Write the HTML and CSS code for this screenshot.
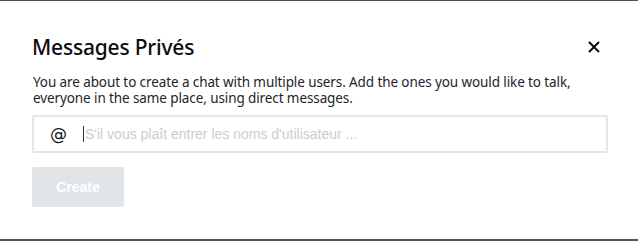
FILE: index.html
```html
<!DOCTYPE html>
<html lang="fr">
<head>
<meta charset="utf-8">
<title>Messages Privés</title>
<link rel="stylesheet" href="styles.css">
</head>
<body>
<div class="backdrop-top"></div>
<div class="modal">
  <header class="modal-header">
    <h2 class="modal-title">Messages Privés</h2>
    <button class="close" aria-label="Fermer">
      <svg width="12" height="12" viewBox="0 0 12 12"><path d="M1 1L11 11M11 1L1 11" stroke="#000" stroke-width="1.8" fill="none"/></svg>
    </button>
  </header>
  <p class="desc">You are about to create a chat with multiple users. Add the ones you would like to talk, everyone in the same place, using direct messages.</p>
  <div class="input">
    <span class="at">@</span>
    <span class="caret"></span>
    <span class="placeholder">S'il vous plaît entrer les noms d'utilisateur ...</span>
  </div>
  <button class="create">Create</button>
</div>
<div class="backdrop-bottom"></div>
</body>
</html>
```
FILE: styles.css
```css
html, body {
  margin: 0;
  padding: 0;
  background: #4c5156;
}
.backdrop-top {
  height: 1px;
  background: #4a4f54;
}
.backdrop-bottom {
  height: 3px;
  background: #51565b;
}
.modal {
  height: 238px;
  box-sizing: border-box;
  background: #fff;
  padding: 32px 30px 0 32px;
  font-family: "Noto Sans", "DejaVu Sans", sans-serif;
  color: #2f343d;
}
.modal-header {
  display: flex;
  align-items: center;
  justify-content: space-between;
  height: 28px;
}
.modal-title {
  margin: 0;
  font-size: 21px;
  font-weight: 500;
  color: #0c0d0f;
  letter-spacing: -0.2px;
}
.close {
  border: 0;
  background: none;
  padding: 0;
  width: 12px;
  height: 12px;
  margin-right: 8px;
  display: flex;
}
.desc {
  margin: 13px 0 0 1px;
  font-size: 13.5px;
  line-height: 16px;
  color: #1f2329;
  letter-spacing: -0.1px;
}
.input {
  margin-top: 9px;
  height: 38px;
  box-sizing: border-box;
  border: 2px solid #e3e6e9;
  border-radius: 2px;
  display: flex;
  align-items: center;
  padding-left: 16px;
}
.at {
  font-family: "DejaVu Sans", sans-serif;
  font-size: 17px;
  font-weight: 500;
  color: #111418;
  width: 17px;
}
.caret {
  width: 1px;
  height: 16px;
  background: #2f343d;
  margin-left: 16px;
}
.placeholder {
  font-family: "Liberation Sans", Arial, sans-serif;
  font-size: 14px;
  color: #c9cdd2;
  margin-left: 1px;
}
.create {
  display: block;
  margin-top: 14px;
  width: 92px;
  height: 40px;
  border: 0;
  border-radius: 2px;
  background: #e1e5e8;
  color: #fff;
  font-family: "Liberation Sans", Arial, sans-serif;
  font-weight: bold;
  font-size: 14px;
}
```
